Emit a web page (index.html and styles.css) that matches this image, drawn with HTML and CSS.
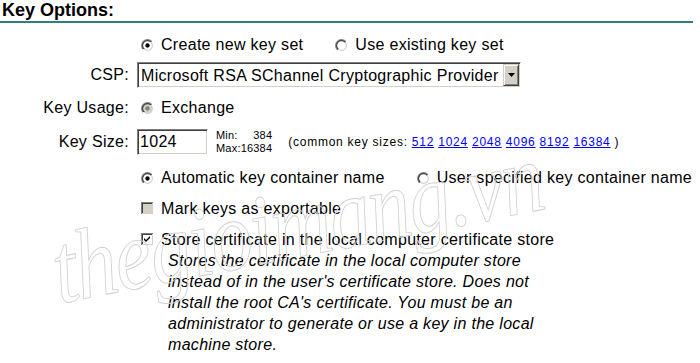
FILE: index.html
```html
<!DOCTYPE html>
<html lang="en">
<head>
    <meta charset="UTF-8">
    <title>Key Options</title>
    <link rel="stylesheet" href="styles.css">
</head>
<body>
    <svg class="defs" aria-hidden="true">
        <defs>
            <linearGradient id="edgeOuter" x1="0" y1="0" x2="1" y2="1">
                <stop offset="50%" stop-color="#808080"/>
                <stop offset="50%" stop-color="#ffffff"/>
            </linearGradient>
            <linearGradient id="edgeInner" x1="0" y1="0" x2="1" y2="1">
                <stop offset="50%" stop-color="#404040"/>
                <stop offset="50%" stop-color="#d4d0c8"/>
            </linearGradient>
        </defs>
        <symbol id="radioOn" viewBox="0 0 12 12">
            <circle cx="6" cy="6" r="6" fill="url(#edgeOuter)"/>
            <circle cx="6" cy="6" r="5" fill="url(#edgeInner)"/>
            <circle cx="6" cy="6" r="4" fill="#fff"/>
            <circle cx="6" cy="6" r="2" fill="#000"/>
        </symbol>
        <symbol id="radioOff" viewBox="0 0 12 12">
            <circle cx="6" cy="6" r="6" fill="url(#edgeOuter)"/>
            <circle cx="6" cy="6" r="5" fill="url(#edgeInner)"/>
            <circle cx="6" cy="6" r="4" fill="#fff"/>
        </symbol>
        <symbol id="radioDisabled" viewBox="0 0 12 12">
            <circle cx="6" cy="6" r="6" fill="url(#edgeOuter)"/>
            <circle cx="6" cy="6" r="5" fill="url(#edgeInner)"/>
            <circle cx="6" cy="6" r="4" fill="#d4d0c8"/>
            <circle cx="6" cy="6" r="2" fill="#808080"/>
        </symbol>
        <symbol id="checkOn" viewBox="0 0 13 13">
            <rect width="13" height="13" fill="#fff"/>
            <path d="M0 0H12V1H1V12H0Z" fill="#808080"/>
            <rect x="1" y="1" width="11" height="11" fill="#d4d0c8"/>
            <path d="M1 1H11V2H2V11H1Z" fill="#404040"/>
            <rect x="2" y="2" width="9" height="9" fill="#fff"/>
            <polygon points="3,5 5,7 9,3 9,5 5,9 3,7" fill="#000"/>
        </symbol>
        <symbol id="checkDisabled" viewBox="0 0 13 13">
            <rect width="13" height="13" fill="#fff"/>
            <path d="M0 0H12V1H1V12H0Z" fill="#808080"/>
            <rect x="1" y="1" width="11" height="11" fill="#d4d0c8"/>
            <path d="M1 1H11V2H2V11H1Z" fill="#404040"/>
            <rect x="2" y="2" width="9" height="9" fill="#d4d0c8"/>
        </symbol>
    </svg>

    <div class="page">
        <h2 class="section-title">Key Options:</h2>

        <div class="row row-mode">
            <div class="label"></div>
            <div class="field">
                <span class="opt"><svg class="ctl"><use href="#radioOn"/></svg>Create new key set</span>
                <span class="opt opt-next"><svg class="ctl"><use href="#radioOff"/></svg>Use existing key set</span>
            </div>
        </div>

        <div class="row row-csp">
            <div class="label">CSP:</div>
            <div class="field">
                <div class="select-wrap">
                    <select class="select">
                        <option>Microsoft RSA SChannel Cryptographic Provider</option>
                    </select>
                    <span class="select-arrow">
                        <svg width="7" height="4" viewBox="0 0 7 4"><polygon points="0,0 7,0 3.5,4" fill="#000"/></svg>
                    </span>
                </div>
            </div>
        </div>

        <div class="row row-usage">
            <div class="label">Key Usage:</div>
            <div class="field">
                <span class="opt"><svg class="ctl"><use href="#radioDisabled"/></svg>Exchange</span>
            </div>
        </div>

        <div class="row row-size">
            <div class="label">Key Size:</div>
            <div class="field">
                <input class="text-input" type="text" value="1024">
                <div class="minmax">
                    <span>Min:</span><span class="num">384</span>
                    <span>Max:</span><span class="num">16384</span>
                </div>
                <span class="common">(common key sizes:
                    <a href="#">512</a> <a href="#">1024</a> <a href="#">2048</a> <a href="#">4096</a> <a href="#">8192</a> <a href="#">16384</a> )</span>
            </div>
        </div>

        <div class="row row-container">
            <div class="label"></div>
            <div class="field">
                <span class="opt"><svg class="ctl"><use href="#radioOn"/></svg>Automatic key container name</span>
                <span class="opt opt-next"><svg class="ctl"><use href="#radioOff"/></svg>User specified key container name</span>
            </div>
        </div>

        <div class="row row-mark">
            <div class="label"></div>
            <div class="field">
                <span class="opt"><svg class="ctl"><use href="#checkDisabled"/></svg>Mark keys as exportable</span>
            </div>
        </div>

        <div class="row row-store">
            <div class="label"></div>
            <div class="field">
                <span class="opt"><svg class="ctl"><use href="#checkOn"/></svg>Store certificate in the local computer certificate store</span>
            </div>
        </div>

        <p class="note">Stores the certificate in the local computer store instead of in the user's certificate store. Does not install the root CA's certificate. You must be an administrator to generate or use a key in the local machine store.</p>

        <div class="watermark">thegioimang.vn</div>
    </div>
</body>
</html>
```

FILE: styles.css
```css
body {
    margin: 0;
    font-family: "Liberation Sans", Arial, sans-serif;
    font-size: 16px;
    letter-spacing: 0.3px;
    color: #000;
    background: #fff;
}

.defs {
    position: absolute;
    width: 0;
    height: 0;
    overflow: hidden;
}

.page {
    position: relative;
    width: 693px;
}

.section-title {
    margin: 0;
    height: 21px;
    padding-left: 2px;
    font-size: 18px;
    font-weight: bold;
    line-height: 21px;
    letter-spacing: 0;
    border-bottom: 2px solid #2f7f80;
}

.row {
    display: flex;
    align-items: center;
}

.label {
    width: 129px;
    margin-right: 8px;
    flex-shrink: 0;
    text-align: right;
}

.field {
    display: flex;
    align-items: center;
    white-space: nowrap;
}

.row-mode { margin-top: 7px; height: 30px; }
.row-csp { height: 30px; }
.row-usage { height: 36px; }
.row-size { height: 32px; }
.row-container { height: 40px; }
.row-mark { height: 21px; }
.row-store { margin-top: 10px; height: 21px; }

.opt {
    display: inline-flex;
    align-items: center;
}

.opt-next {
    margin-left: 28px;
}

.ctl {
    width: 13px;
    height: 13px;
    margin: 0 7px 0 4px;
    flex-shrink: 0;
}

/* classic sunken field */
.select-wrap {
    position: relative;
}

.select {
    -webkit-appearance: none;
    appearance: none;
    width: 384px;
    height: 26px;
    padding: 0 0 0 3px;
    font: inherit;
    letter-spacing: inherit;
    color: #000;
    background: #fff;
    border-style: solid;
    border-width: 1px;
    border-color: #808080 #fff #fff #808080;
    box-shadow: inset 1px 1px 0 #404040, inset -1px -1px 0 #d4d0c8;
    border-radius: 0;
    outline: none;
}

.select-arrow {
    position: absolute;
    top: 2px;
    right: 2px;
    width: 16px;
    height: 22px;
    box-sizing: border-box;
    display: flex;
    align-items: center;
    justify-content: center;
    background: #d4d0c8;
    border-style: solid;
    border-width: 1px;
    border-color: #d4d0c8 #404040 #404040 #d4d0c8;
    box-shadow: inset 1px 1px 0 #fff, inset -1px -1px 0 #808080;
}

.text-input {
    box-sizing: border-box;
    width: 71px;
    height: 26px;
    padding: 0 0 0 2px;
    margin: 0;
    font: inherit;
    letter-spacing: inherit;
    color: #000;
    border-style: solid;
    border-width: 1px;
    border-color: #808080 #fff #fff #808080;
    box-shadow: inset 1px 1px 0 #404040, inset -1px -1px 0 #d4d0c8;
    border-radius: 0;
    outline: none;
}

.minmax {
    display: grid;
    grid-template-columns: auto auto;
    margin-left: 8px;
    font-size: 11px;
    line-height: 13px;
    letter-spacing: 0.2px;
}

.minmax .num {
    text-align: right;
}

.common {
    margin-left: 16px;
    font-size: 12px;
    letter-spacing: 0.75px;
}

.common a {
    color: #0000ff;
}

.note {
    width: 372px;
    margin: 0 0 0 168px;
    font-style: italic;
    line-height: 21px;
}

.watermark {
    position: absolute;
    left: 64px;
    top: 212px;
    font-family: "Liberation Serif", serif;
    font-style: italic;
    font-size: 100px;
    letter-spacing: -2px;
    color: transparent;
    -webkit-text-stroke: 1px #d2d2d2;
    transform: rotate(-11deg) scaleX(0.84);
    transform-origin: left bottom;
    pointer-events: none;
    white-space: nowrap;
}
```
